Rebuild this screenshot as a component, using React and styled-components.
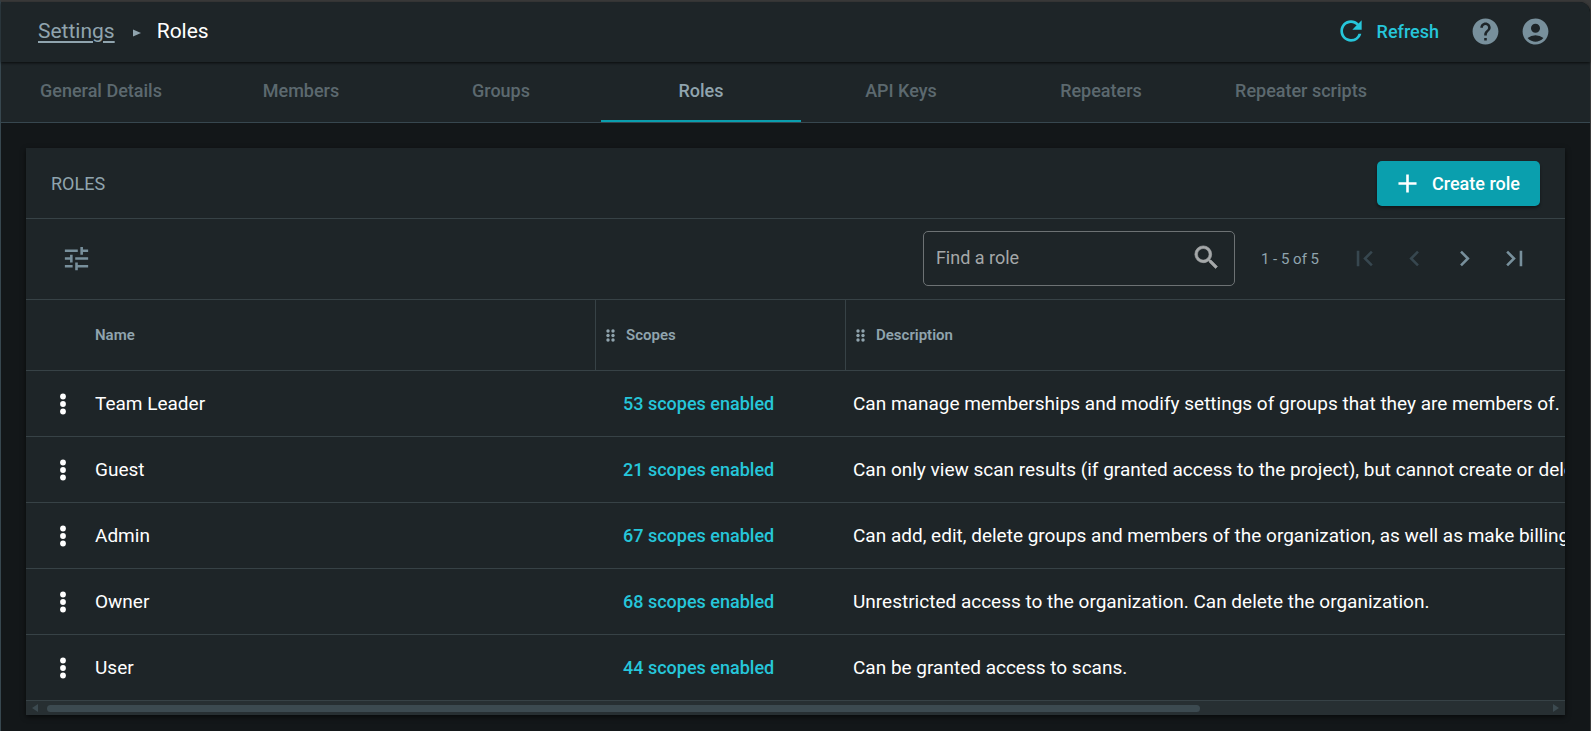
import { useState } from 'react';
import styled, { createGlobalStyle } from 'styled-components';
import {
  MdRefresh,
  MdHelp,
  MdAccountCircle,
  MdAdd,
  MdTune,
  MdFirstPage,
  MdChevronLeft,
  MdChevronRight,
  MdLastPage,
} from 'react-icons/md';

const tabs = ['General Details', 'Members', 'Groups', 'Roles', 'API Keys', 'Repeaters', 'Repeater scripts'];

const roles = [
  { name: 'Team Leader', scopes: 53, text: 'Can manage memberships and modify settings of groups that they are members of.' },
  { name: 'Guest', scopes: 21, text: 'Can only view scan results (if granted access to the project), but cannot create or delete entities.' },
  { name: 'Admin', scopes: 67, text: 'Can add, edit, delete groups and members of the organization, as well as make billing changes.' },
  { name: 'Owner', scopes: 68, text: 'Unrestricted access to the organization. Can delete the organization.' },
  { name: 'User', scopes: 44, text: 'Can be granted access to scans.' },
];

function DragDots() {
  return (
    <svg width="9" height="13" viewBox="0 0 9 13" fill="currentColor" aria-hidden="true">
      {[2, 6.5, 11].map((y) => (
        <g key={y}>
          <circle cx="2" cy={y} r="1.7" />
          <circle cx="7" cy={y} r="1.7" />
        </g>
      ))}
    </svg>
  );
}

function MenuDots() {
  return (
    <svg width="30" height="30" viewBox="0 0 30 30" fill="currentColor" aria-hidden="true">
      <circle cx="15" cy="7.5" r="2.9" />
      <circle cx="15" cy="15" r="2.9" />
      <circle cx="15" cy="22.5" r="2.9" />
    </svg>
  );
}

function SearchIcon() {
  return (
    <svg width="31" height="31" viewBox="0 0 24 24" fill="currentColor" stroke="currentColor" strokeWidth="0.5" aria-hidden="true">
      <path d="M15.5 14h-.79l-.28-.27A6.47 6.47 0 0 0 16 9.5 6.5 6.5 0 1 0 9.5 16c1.61 0 3.09-.59 4.23-1.57l.27.28v.79l5 4.99L20.49 19l-4.99-5zm-6 0C7.01 14 5 11.99 5 9.5S7.01 5 9.5 5 14 7.01 14 9.5 11.99 14 9.5 14z" />
    </svg>
  );
}

function App() {
  const [active, setActive] = useState('Roles');
  const [query, setQuery] = useState('');

  const shown = roles.filter((r) => r.name.toLowerCase().includes(query.toLowerCase()));

  return (
    <>
      <GlobalStyle />
      <Screen>
        <Header>
          <Crumbs aria-label="Breadcrumb">
            <CrumbLink href="#settings">Settings</CrumbLink>
            <CrumbArrow viewBox="0 0 8 8" aria-hidden="true">
              <path d="M0 0.5 8 4 0 7.5z" />
            </CrumbArrow>
            <Current>Roles</Current>
          </Crumbs>
          <RefreshButton type="button">
            <MdRefresh size={32} />
            Refresh
          </RefreshButton>
          <IconButton type="button" aria-label="Help"><MdHelp size={31} /></IconButton>
          <IconButton type="button" aria-label="Account"><MdAccountCircle size={31} /></IconButton>
        </Header>

        <Tabs>
          {tabs.map((tab) => (
            <Tab key={tab} type="button" $active={tab === active} onClick={() => setActive(tab)}>
              {tab}
            </Tab>
          ))}
        </Tabs>

        <Content>
          <Panel>
            <PanelHead>
              <Title>ROLES</Title>
              <CreateButton type="button">
                <MdAdd size={31} />
                Create role
              </CreateButton>
            </PanelHead>

            <Toolbar>
              <IconButton type="button" aria-label="Columns"><MdTune size={31} /></IconButton>
              <Spacer />
              <SearchBox>
                <SearchInput
                  type="text"
                  aria-label="Find a role"
                  placeholder="Find a role"
                  value={query}
                  onChange={(e) => setQuery(e.target.value)}
                />
                <SearchIcon />
              </SearchBox>
              <Range>1 - 5 of 5</Range>
              <Pager>
                <IconButton type="button" aria-label="First page" disabled><MdFirstPage size={31} /></IconButton>
                <IconButton type="button" aria-label="Previous page" disabled><MdChevronLeft size={31} /></IconButton>
                <IconButton type="button" aria-label="Next page"><MdChevronRight size={31} /></IconButton>
                <IconButton type="button" aria-label="Last page"><MdLastPage size={31} /></IconButton>
              </Pager>
            </Toolbar>

            <Scroller>
              <Table>
                <colgroup>
                  <col width="69" />
                  <col width="501" />
                  <col width="250" />
                  <col />
                </colgroup>
                <thead>
                  <tr>
                    <Th aria-label="Actions" />
                    <NameTh $divider>Name</NameTh>
                    <Th $divider>
                      <HeadCell><DragDots />Scopes</HeadCell>
                    </Th>
                    <Th>
                      <HeadCell><DragDots />Description</HeadCell>
                    </Th>
                  </tr>
                </thead>
                <tbody>
                  {shown.map((role) => (
                    <tr key={role.name}>
                      <MenuTd>
                        <RowMenu type="button" aria-label={`Actions for ${role.name}`}>
                          <MenuDots />
                        </RowMenu>
                      </MenuTd>
                      <Td>{role.name}</Td>
                      <ScopesTd>
                        <ScopesLink href="#scopes">{role.scopes} scopes enabled</ScopesLink>
                      </ScopesTd>
                      <DescTd>{role.text}</DescTd>
                    </tr>
                  ))}
                </tbody>
              </Table>
            </Scroller>

            <ScrollBar aria-hidden="true">
              <ScrollArrow viewBox="0 0 6 8"><path d="M6 0v8L0 4z" /></ScrollArrow>
              <Track><Thumb /></Track>
              <ScrollArrow viewBox="0 0 6 8"><path d="M0 0v8l6-4z" /></ScrollArrow>
            </ScrollBar>
          </Panel>
        </Content>
      </Screen>
    </>
  );
}

const GlobalStyle = createGlobalStyle`
  * {
    box-sizing: border-box;
  }
  body {
    margin: 0;
    background: #3a3a3a;
    color: #fff;
    font-family: Roboto, "Liberation Sans", sans-serif;
  }
  button, input {
    font-family: inherit;
  }
  button {
    padding: 0;
    border: 0;
    background: none;
    cursor: pointer;
  }
  svg {
    flex-shrink: 0;
  }
`

const Screen = styled.div`
  display: flex;
  flex-direction: column;
  min-height: 100vh;
  border-top: 2px solid #3a3a3a;
  border-left: 1px solid #37474f;
  border-right: 1px solid #3a3a3a;
  border-top-right-radius: 12px;
  background: #131719;
`

const Header = styled.header`
  display: flex;
  align-items: center;
  height: 60px;
  padding: 0 39px 2px 37px;
  gap: 19px;
  border-top-right-radius: 10px;
  background: #1e2528;
  box-shadow: 0 1px 3px rgba(0, 0, 0, 0.7);
  position: relative;
  z-index: 1;
`

const Crumbs = styled.nav`
  display: flex;
  align-items: center;
  margin-right: auto;
  font-size: 21px;
`

const CrumbLink = styled.a`
  color: #90a4ae;
  text-underline-offset: 3px;
`

const CrumbArrow = styled.svg`
  width: 8px;
  height: 8px;
  margin: 4px 16px 0 18px;
  fill: #90a4ae;
`

const Current = styled.span`
  color: #fff;
`

const RefreshButton = styled.button`
  display: flex;
  align-items: center;
  gap: 10px;
  margin-right: 12px;
  color: #26c6da;
  font-size: 18px;
  font-weight: 500;
`

const IconButton = styled.button`
  display: flex;
  color: #78909c;

  &:disabled {
    color: #37474f;
    cursor: default;
  }
`

const Tabs = styled.nav`
  display: flex;
  height: 61px;
  border-bottom: 1px solid #37474f;
  background: #1e2528;
`

const Tab = styled.button`
  width: 200px;
  padding-bottom: 3px;
  border-top: 2px solid transparent;
  border-bottom: 2px solid ${props => props.$active ? '#0a9fae' : 'transparent'};
  color: ${props => props.$active ? '#90a4ae' : '#5c696f'};
  font-size: 18px;
  font-weight: 500;
`

const Content = styled.main`
  flex: 1;
  padding: 25px 25px 15px;
`

const Panel = styled.section`
  background: #1e2528;
  box-shadow: 0 2px 5px rgba(0, 0, 0, 0.6);
`

const PanelHead = styled.div`
  display: flex;
  align-items: center;
  justify-content: space-between;
  height: 71px;
  padding: 0 25px;
  border-bottom: 1px solid #374246;
`

const Title = styled.h1`
  margin: 0;
  color: #90a4ae;
  font-size: 18px;
  font-weight: 400;
`

const CreateButton = styled.button`
  display: flex;
  align-items: center;
  gap: 9px;
  height: 45px;
  padding: 0 20px 0 15px;
  border-radius: 5px;
  background: #0a9fae;
  box-shadow: 0 2px 3px rgba(0, 0, 0, 0.4);
  color: #fff;
  font-size: 18px;
  font-weight: 500;
`

const Toolbar = styled.div`
  display: flex;
  align-items: center;
  height: 81px;
  padding: 0 35px 1px;
  border-bottom: 1px solid #374246;
`

const Spacer = styled.div`
  flex: 1;
`

const SearchBox = styled.label`
  display: flex;
  align-items: center;
  width: 312px;
  height: 55px;
  padding: 0 12px 2px;
  border: 1px solid #6d7274;
  border-radius: 5px;
  color: #a5a8a9;
`

const SearchInput = styled.input`
  flex: 1;
  min-width: 0;
  padding: 0;
  border: 0;
  outline: none;
  background: none;
  color: #fff;
  font-size: 18px;

  &::placeholder {
    color: #a5a8a9;
    opacity: 1;
  }
`

const Range = styled.span`
  margin-left: 26px;
  color: #90a4ae;
  font-size: 15px;
`

const Pager = styled.div`
  display: flex;
  gap: 19px;
  margin-left: 30px;
`

const Scroller = styled.div`
  overflow-x: auto;
  scrollbar-width: none;
`

const Table = styled.table`
  width: 2011px;
  table-layout: fixed;
  border-collapse: separate;
  border-spacing: 0;
`

const Th = styled.th`
  height: 71px;
  padding: 0 0 0 10px;
  border-bottom: 1px solid #374246;
  border-right: ${props => props.$divider ? '1px solid #374246' : '0'};
  color: #90a4ae;
  font-size: 15px;
  font-weight: 600;
  text-align: left;
`

const NameTh = styled(Th)`
  padding-left: 0;
`

const HeadCell = styled.div`
  display: flex;
  align-items: center;
  gap: 11px;
`

const Td = styled.td`
  height: 66px;
  padding: 0;
  border-bottom: 1px solid #374246;
  font-size: 19px;
  white-space: nowrap;
`

const MenuTd = styled(Td)`
  padding-left: 22px;
`

const ScopesTd = styled(Td)`
  padding-left: 27px;
`

const DescTd = styled(Td)`
  padding-left: 7px;
`

const RowMenu = styled.button`
  display: flex;
  color: #fff;
`

const ScopesLink = styled.a`
  color: #26c6da;
  font-size: 18px;
  font-weight: 500;
  text-decoration: none;
`

const ScrollBar = styled.div`
  display: flex;
  align-items: center;
  gap: 9px;
  height: 14px;
  padding: 0 6px;
  background: #272f32;
`

const ScrollArrow = styled.svg`
  width: 6px;
  height: 8px;
  fill: #3c4a50;
`

const Track = styled.div`
  flex: 1;
  height: 7px;
`

const Thumb = styled.div`
  width: 77%;
  height: 100%;
  border-radius: 4px;
  background: #3c4a50;
`

export default App;
